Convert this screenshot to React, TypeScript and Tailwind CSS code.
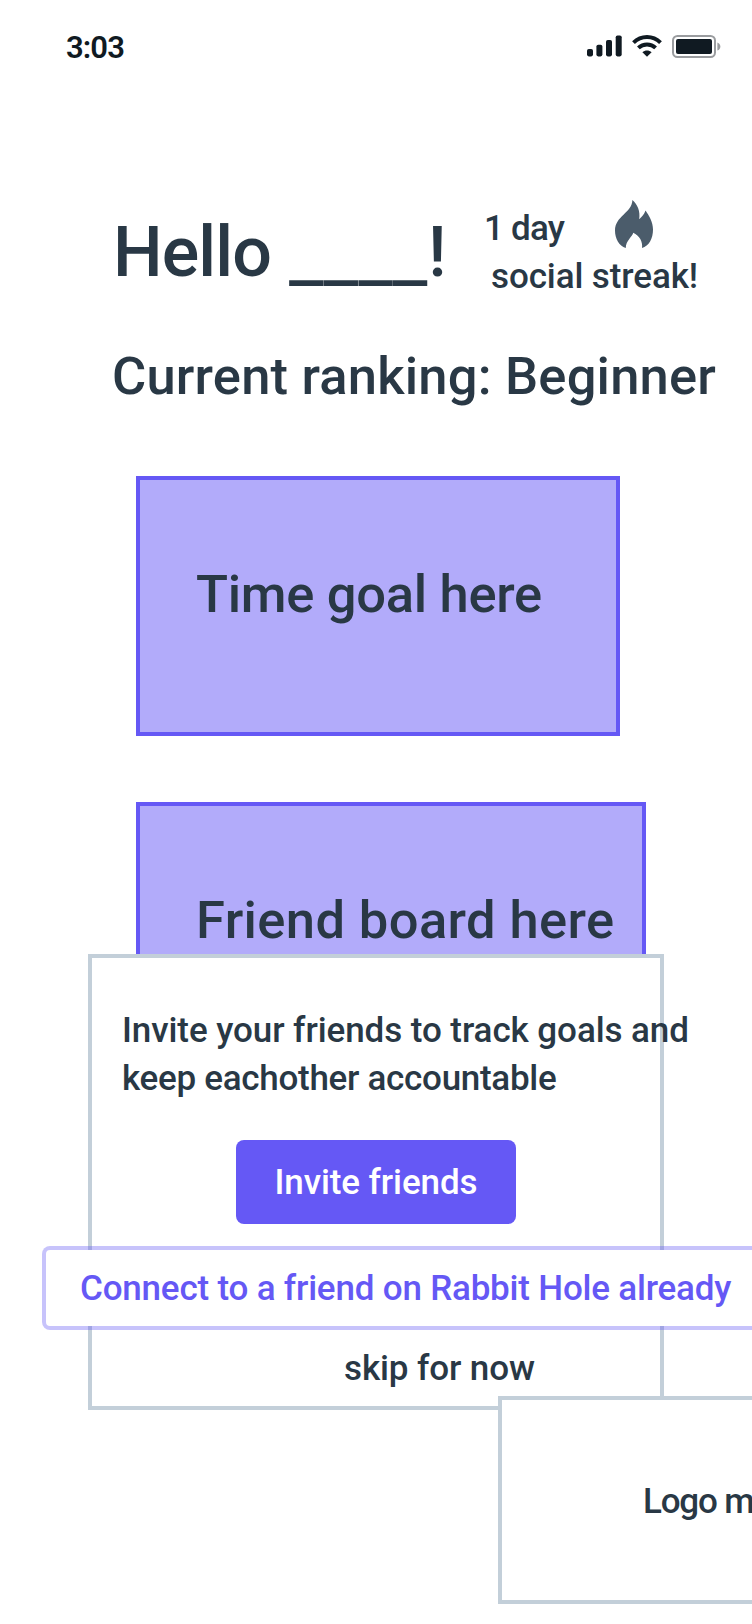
function SignalIcon() {
  return (
    <svg className="h-[22px] w-[35px]" viewBox="0 0 35 22" fill="#101a22">
      <rect x="0" y="14" width="6" height="7.4" rx="1.8" />
      <rect x="9.4" y="9.8" width="6" height="11.6" rx="1.8" />
      <rect x="19" y="5" width="6" height="16.4" rx="1.8" />
      <rect x="28.7" y="0.4" width="6" height="21" rx="1.8" />
    </svg>
  );
}

function WifiIcon() {
  return (
    <svg className="h-[22px] w-[30px]" viewBox="0 0 30 22" fill="none">
      <path d="M1.5 7.6 C9.2 0.2 20.8 0.2 28.5 7.6" stroke="#101a22" strokeWidth="4" />
      <path d="M6.4 12.9 C11.2 8.4 18.8 8.4 23.6 12.9" stroke="#101a22" strokeWidth="4" />
      <path d="M10.4 17.2 C13 15 17 15 19.6 17.2 L15 21.8 Z" fill="#101a22" />
    </svg>
  );
}

function BatteryIcon() {
  return (
    <svg className="h-[23px] w-[50px]" viewBox="0 0 50 23">
      <rect x="1" y="1" width="42" height="21" rx="4.5" fill="none" stroke="#9a9c9f" strokeWidth="2" />
      <rect x="4" y="4" width="36" height="15" rx="2" fill="#101a22" />
      <path d="M45.4 7.4 C49.4 9 49.4 14 45.4 15.6 Z" fill="#9a9c9f" />
    </svg>
  );
}

function FlameIcon() {
  return (
    <svg className="h-12 w-[38px]" viewBox="0 0 38 48" fill="#4b5c6b">
      <path d="M17.4 0 C22.5 4.5 25.5 11 24.2 19.3 C27 17 29.4 14 30.5 10.6 C34 15.5 38 22 38 29.5 C38 38.5 34 46 27 48 C28 42 24.5 35.5 18.2 32.8 C18 36 10.5 41 10.8 48 C4 46 0 38.5 0 30.5 C0 16 17 13 17.4 0 Z" />
    </svg>
  );
}

function StatusBar() {
  return (
    <div className="flex h-[94px] items-start pt-[30px] pl-[66px]">
      <span className="w-[521px] text-[31px] leading-9 font-semibold tracking-[-0.9px] text-[#101a22]">
        3:03
      </span>
      <div className="flex gap-[10px] pt-[5px]">
        <SignalIcon />
        <WifiIcon />
        <BatteryIcon />
      </div>
    </div>
  );
}

function Greeting() {
  return (
    <header className="flex h-[206px] pt-[110px] pl-[112px]">
      <h1 className="flex w-[372px] pt-[6px] text-[70px] leading-[84px]">
        <span className="w-[177px] pl-px tracking-[-0.9px]">Hello</span>
        <span className="w-[139px] pt-[2px] text-[76.7px] font-normal">____</span>
        <span>!</span>
      </h1>
      <div className="pt-px text-[35px] leading-12">
        <div className="flex">
          <span className="w-[131px] tracking-[-0.8px]">1 day</span>
          <div className="-mt-[5px]">
            <FlameIcon />
          </div>
        </div>
        <p className="pl-[7px] tracking-[-0.1px]">social streak!</p>
      </div>
    </header>
  );
}

function InviteModal() {
  return (
    <div className="absolute top-[954px] left-[88px] flex h-[456px] w-[576px] flex-col items-start border-4 border-[#c3cfd9] bg-white pt-[49px] text-[35px] leading-12">
      <p className="ml-[30px]">
        <span className="block tracking-[-0.08px]">Invite your friends to track goals and</span>
        <span className="block tracking-[-0.29px]">keep eachother accountable</span>
      </p>
      <button className="mt-[37px] ml-36 h-[84px] w-[280px] rounded-lg bg-[#6558f5] pt-[2px] tracking-[-0.11px] text-white">
        Invite friends
      </button>
      <button className="mt-[22px] -ml-[50px] h-[84px] w-[728px] rounded-lg border-4 border-[#6558f5]/36 bg-white bg-clip-padding pt-[2px] pl-[34px] text-left tracking-[-0.2px] text-[#6558f5]">
        Connect to a friend on Rabbit Hole already
      </button>
      <button className="mt-[15px] ml-[252px] tracking-[-0.11px]">skip for now</button>
    </div>
  );
}

export default function App() {
  return (
    <div className="relative h-[1624px] w-[752px] overflow-hidden bg-white font-['Roboto',sans-serif] font-medium whitespace-nowrap text-[#293845]">
      <StatusBar />
      <Greeting />
      <h2 className="mt-11 pl-[112px] text-[52.5px] leading-16 tracking-[0.19px]">
        Current ranking: Beginner
      </h2>
      <main className="mt-[68px] flex flex-col gap-[66px] pl-[136px] text-[52.5px] leading-16">
        <section className="h-[260px] w-[484px] border-4 border-[#6558f5] bg-[#b2abfa] pt-[82px] pl-14 tracking-[-0.3px]">
          Time goal here
        </section>
        <section className="h-[260px] w-[510px] border-4 border-[#6558f5] bg-[#b2abfa] pt-[82px] pl-14 tracking-[0.38px]">
          Friend board here
        </section>
      </main>
      <InviteModal />
      <footer className="absolute top-[1396px] left-[498px] h-[208px] w-[400px] border-4 border-[#c3cfd9] bg-white pt-[78px] pl-[141px] text-[35px] leading-12 tracking-[-1.2px]">
        Logo m
      </footer>
    </div>
  );
}
